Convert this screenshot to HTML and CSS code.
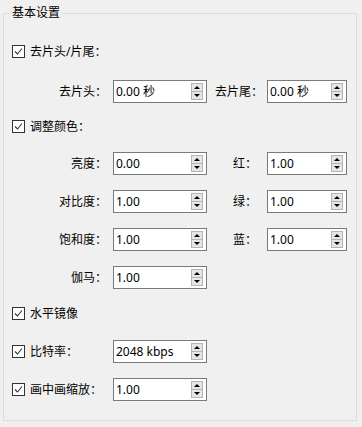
FILE: index.html
```html
<!DOCTYPE html>
<html lang="zh">
<head>
<meta charset="utf-8">
<link rel="stylesheet" href="styles.css">
</head>
<body>
<fieldset class="group">
  <legend class="group-title">基本设置</legend>
  <div class="rows">
    <div class="row row-cb1">
      <span class="check"><span class="cb"><svg viewBox="0 0 11 11" width="11" height="11"><polyline points="2,5.5 4.5,8 9,2.5" fill="none" stroke="#333" stroke-width="1.1"/></svg></span><span>去片头/片尾：</span></span>
    </div>
    <div class="row row-trim">
      <span class="lbl">去片头：</span>
      <div class="spin"><span class="val">0.00 秒</span><span class="btns"><span class="up"></span><span class="down"></span></span></div>
      <span class="lbl lbl2">去片尾：</span>
      <div class="spin"><span class="val">0.00 秒</span><span class="btns"><span class="up"></span><span class="down"></span></span></div>
    </div>
    <div class="row row-cb2">
      <span class="check"><span class="cb"><svg viewBox="0 0 11 11" width="11" height="11"><polyline points="2,5.5 4.5,8 9,2.5" fill="none" stroke="#333" stroke-width="1.1"/></svg></span><span>调整颜色：</span></span>
    </div>
    <div class="row row-c1">
      <span class="lbl">亮度：</span>
      <div class="spin"><span class="val">0.00</span><span class="btns"><span class="up"></span><span class="down"></span></span></div>
      <span class="lbl lbl3">红：</span>
      <div class="spin"><span class="val">1.00</span><span class="btns"><span class="up"></span><span class="down"></span></span></div>
    </div>
    <div class="row row-c">
      <span class="lbl">对比度：</span>
      <div class="spin"><span class="val">1.00</span><span class="btns"><span class="up"></span><span class="down"></span></span></div>
      <span class="lbl lbl3">绿：</span>
      <div class="spin"><span class="val">1.00</span><span class="btns"><span class="up"></span><span class="down"></span></span></div>
    </div>
    <div class="row row-c">
      <span class="lbl">饱和度：</span>
      <div class="spin"><span class="val">1.00</span><span class="btns"><span class="up"></span><span class="down"></span></span></div>
      <span class="lbl lbl3">蓝：</span>
      <div class="spin"><span class="val">1.00</span><span class="btns"><span class="up"></span><span class="down"></span></span></div>
    </div>
    <div class="row row-c">
      <span class="lbl">伽马：</span>
      <div class="spin"><span class="val">1.00</span><span class="btns"><span class="up"></span><span class="down"></span></span></div>
    </div>
    <div class="row row-cb3">
      <span class="check"><span class="cb"><svg viewBox="0 0 11 11" width="11" height="11"><polyline points="2,5.5 4.5,8 9,2.5" fill="none" stroke="#333" stroke-width="1.1"/></svg></span><span>水平镜像</span></span>
    </div>
    <div class="row row-c">
      <span class="check"><span class="cb"><svg viewBox="0 0 11 11" width="11" height="11"><polyline points="2,5.5 4.5,8 9,2.5" fill="none" stroke="#333" stroke-width="1.1"/></svg></span><span>比特率：</span></span>
      <div class="spin"><span class="val">2048 kbps</span><span class="btns"><span class="up"></span><span class="down"></span></span></div>
    </div>
    <div class="row row-c">
      <span class="check"><span class="cb"><svg viewBox="0 0 11 11" width="11" height="11"><polyline points="2,5.5 4.5,8 9,2.5" fill="none" stroke="#333" stroke-width="1.1"/></svg></span><span>画中画缩放：</span></span>
      <div class="spin"><span class="val">1.00</span><span class="btns"><span class="up"></span><span class="down"></span></span></div>
    </div>
  </div>
</fieldset>
</body>
</html>
```

FILE: styles.css
```css
html, body {
  margin: 0;
  padding: 0;
  background: #f0f0f0;
}
body {
  font-family: "Noto Sans", "Noto Sans CJK SC", sans-serif;
  font-size: 12px;
  color: #000;
  width: 362px;
  height: 427px;
  overflow: hidden;
}
.group {
  margin: 5px 5px 0 3px;
  padding: 0;
  border: 1px solid #dcdcdc;
  min-width: 0;
}
.group-title {
  margin-left: 6px;
  padding: 0 2px;
  line-height: 16px;
  font-size: 12px;
}
.rows {
  display: flex;
  flex-direction: column;
  padding: 19px 0 19px 8px;
}
.row {
  height: 23px;
  display: grid;
  grid-template-columns: 101px 94px 60px 80px;
  align-items: center;
  line-height: 16px;
}
.row-trim { margin-top: 17px; }
.row-cb2 { margin-top: 12px; }
.row-c1 { margin-top: 14px; }
.row-c { margin-top: 15px; }
.row-cb3 { margin-top: 13px; }

.check {
  display: flex;
  align-items: center;
  gap: 5px;
  white-space: nowrap;
}
.row-cb1 .check, .row-cb2 .check, .row-cb3 .check {
  grid-column: 1 / 5;
}
.cb {
  width: 13px;
  height: 13px;
  box-sizing: border-box;
  border: 1px solid #333;
  background: #fff;
  display: flex;
}
.cb svg { display: block; }

.lbl {
  text-align: right;
  padding-right: 6px;
  white-space: nowrap;
}
.lbl2 { padding-right: 4px; }
.lbl3 { padding-right: 10px; }

.spin {
  height: 23px;
  box-sizing: border-box;
  border: 1px solid #7a7a7a;
  background: #fff;
  display: flex;
  align-items: center;
  padding: 0 3px 0 2px;
}
.val {
  flex: 1;
  white-space: nowrap;
}
.btns {
  width: 12px;
  height: 17px;
  box-sizing: border-box;
  border: 1px solid #b4b4b4;
  background: #e6e6e6;
  display: flex;
  flex-direction: column;
}
.up, .down {
  flex: 1;
  display: flex;
  align-items: center;
  justify-content: center;
}
.up { border-bottom: 1px solid #b4b4b4; }
.up::before {
  content: "";
  border-left: 3px solid transparent;
  border-right: 3px solid transparent;
  border-bottom: 3px solid #000;
}
.down::before {
  content: "";
  border-left: 3px solid transparent;
  border-right: 3px solid transparent;
  border-top: 3px solid #000;
}
```
